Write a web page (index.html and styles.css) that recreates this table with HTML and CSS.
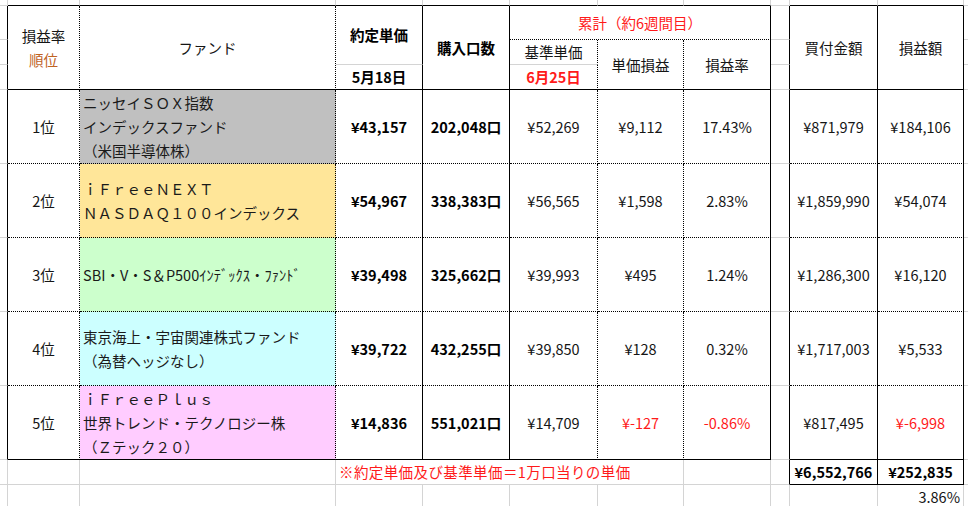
FILE: index.html
```html
<!DOCTYPE html>
<html lang="ja">
<head>
<meta charset="utf-8">
<title>損益表</title>
<link rel="stylesheet" href="styles.css">
</head>
<body>
<table class="sheet">
  <colgroup>
    <col class="c-m"><col class="c-a"><col class="c-b"><col class="c-c"><col class="c-d"><col class="c-e"><col class="c-f"><col class="c-g"><col class="c-h"><col class="c-i"><col class="c-j"><col class="c-k">
  </colgroup>
  <tr class="r-top">
    <td></td><td class="bs"></td><td class="bs"></td><td class="bs"></td><td class="bs"></td><td class="bs"></td><td class="bs"></td><td class="bs"></td><td></td><td class="bs"></td><td class="bs"></td><td class="k"></td>
  </tr>
  <tr class="r-h1">
    <td class="rs"></td>
    <td rowspan="3" class="rd bs">損益率<br><span class="orange">順位</span></td>
    <td rowspan="3" class="rd bs">ファンド</td>
    <td rowspan="2" class="rs b">約定単価</td>
    <td rowspan="3" class="rs bs b">購入口数</td>
    <td colspan="3" class="rs bd red">累計（約6週間目）</td>
    <td class="rs"></td>
    <td rowspan="3" class="rs bs">買付金額</td>
    <td rowspan="3" class="rs bs">損益額</td>
    <td class="k"></td>
  </tr>
  <tr class="r-h2">
    <td class="rs"></td>
    <td class="rd">基準単価</td>
    <td rowspan="2" class="rd bs">単価損益</td>
    <td rowspan="2" class="rs bs">損益率</td>
    <td class="rs"></td>
    <td class="k"></td>
  </tr>
  <tr class="r-h3">
    <td class="rs"></td>
    <td class="rs bs b">5月18日</td>
    <td class="rd bs b red">6月25日</td>
    <td class="rs"></td>
    <td class="k"></td>
  </tr>
  <tr class="r-data">
    <td class="rs"></td>
    <td class="rd bd">1位</td>
    <td class="rd bd fund f-gray">ニッセイＳＯＸ指数<br>インデックスファンド<br>（米国半導体株）</td>
    <td class="rs bd b">¥43,157</td>
    <td class="rs bd b">202,048口</td>
    <td class="rd bd">¥52,269</td>
    <td class="rd bd">¥9,112</td>
    <td class="rs bd">17.43%</td>
    <td class="rs"></td>
    <td class="rs bd">¥871,979</td>
    <td class="rs bd">¥184,106</td>
    <td class="k"></td>
  </tr>
  <tr class="r-data">
    <td class="rs"></td>
    <td class="rd bd">2位</td>
    <td class="rd bd fund f-yellow">ｉＦｒｅｅＮＥＸＴ<br>ＮＡＳＤＡＱ１００インデックス</td>
    <td class="rs bd b">¥54,967</td>
    <td class="rs bd b">338,383口</td>
    <td class="rd bd">¥56,565</td>
    <td class="rd bd">¥1,598</td>
    <td class="rs bd">2.83%</td>
    <td class="rs"></td>
    <td class="rs bd">¥1,859,990</td>
    <td class="rs bd">¥54,074</td>
    <td class="k"></td>
  </tr>
  <tr class="r-data">
    <td class="rs"></td>
    <td class="rd bd">3位</td>
    <td class="rd bd fund f-green">SBI・V・S＆P500ｲﾝﾃﾞｯｸｽ・ﾌｧﾝﾄﾞ</td>
    <td class="rs bd b">¥39,498</td>
    <td class="rs bd b">325,662口</td>
    <td class="rd bd">¥39,993</td>
    <td class="rd bd">¥495</td>
    <td class="rs bd">1.24%</td>
    <td class="rs"></td>
    <td class="rs bd">¥1,286,300</td>
    <td class="rs bd">¥16,120</td>
    <td class="k"></td>
  </tr>
  <tr class="r-data">
    <td class="rs"></td>
    <td class="rd bd">4位</td>
    <td class="rd bd fund f-cyan">東京海上・宇宙関連株式ファンド<br>（為替ヘッジなし）</td>
    <td class="rs bd b">¥39,722</td>
    <td class="rs bd b">432,255口</td>
    <td class="rd bd">¥39,850</td>
    <td class="rd bd">¥128</td>
    <td class="rs bd">0.32%</td>
    <td class="rs"></td>
    <td class="rs bd">¥1,717,003</td>
    <td class="rs bd">¥5,533</td>
    <td class="k"></td>
  </tr>
  <tr class="r-data">
    <td class="rs"></td>
    <td class="rd bs">5位</td>
    <td class="rd bs fund f-pink">ｉＦｒｅｅＰｌｕｓ<br>世界トレンド・テクノロジー株<br>（Ｚテック２０）</td>
    <td class="rs bs b">¥14,836</td>
    <td class="rs bs b">551,021口</td>
    <td class="rd bs">¥14,709</td>
    <td class="rd bs red">¥-127</td>
    <td class="rs bs red">-0.86%</td>
    <td class="rs"></td>
    <td class="rs bs">¥817,495</td>
    <td class="rs bs red">¥-6,998</td>
    <td class="k"></td>
  </tr>
  <tr class="r-row">
    <td></td>
    <td></td>
    <td></td>
    <td colspan="4" class="note red">※約定単価及び基準単価＝1万口当りの単価</td>
    <td></td>
    <td class="rs"></td>
    <td class="rs bs b">¥6,552,766</td>
    <td class="rs bs b">¥252,835</td>
    <td class="k"></td>
  </tr>
  <tr class="r-row">
    <td></td><td></td><td></td><td></td><td></td><td></td><td></td><td></td><td></td><td></td>
    <td class="num-right">3.86%</td>
    <td class="k"></td>
  </tr>
</table>
</body>
</html>
```

FILE: styles.css
```css
html, body {
  margin: 0;
  padding: 0;
  background: #ffffff;
}

body {
  font-family: "Noto Sans CJK JP", "Noto Sans", sans-serif;
  font-size: 14.5px;
  color: #151515;
  overflow: hidden;
}

.sheet {
  border-collapse: separate;
  border-spacing: 0;
  table-layout: fixed;
  width: 968px;
}

.sheet td {
  box-sizing: border-box;
  padding: 0 2px;
  border-right: 1px solid #d4d4d4;
  border-bottom: 1px solid #d4d4d4;
  text-align: center;
  vertical-align: middle;
  line-height: 24px;
  white-space: nowrap;
  overflow: visible;
}

.sheet td.k {
  border-right: none;
}

.c-m { width: 8px; }
.c-a { width: 72px; }
.c-b { width: 256px; }
.c-c { width: 87px; }
.c-d { width: 87px; }
.c-e { width: 88px; }
.c-f { width: 86px; }
.c-g { width: 87px; }
.c-h { width: 19px; }
.c-i { width: 88px; }
.c-j { width: 86px; }
.c-k { width: 4px; }

.r-top td { height: 6px; }
.r-h1 td { height: 34px; }
.r-h2 td, .r-h3 td { height: 25px; }
.r-data td { height: 74px; }
.r-row td { height: 25px; }

.sheet td.rs { border-right: 1px solid #000; }
.sheet td.rd { border-right: 1px dotted #000; }
.sheet td.bs { border-bottom: 1px solid #000; }
.sheet td.bd { border-bottom: 1px dotted #000; }

.b { font-weight: 700; color: #000; }
.red { color: #ff1a1a; }
.orange { color: #c0621f; }

.sheet td.fund {
  text-align: left;
  padding-left: 3px;
  color: #1a1a1a;
}

.f-gray { background: #c0c0c0; }
.f-yellow { background: #ffe699; }
.f-green { background: #ccffcc; }
.f-cyan { background: #ccffff; }
.f-pink { background: #ffccff; }

.sheet td.note {
  text-align: left;
  padding-left: 3px;
  letter-spacing: 0.4px;
}

.sheet td.num-right {
  text-align: right;
  padding-right: 3px;
}
```
